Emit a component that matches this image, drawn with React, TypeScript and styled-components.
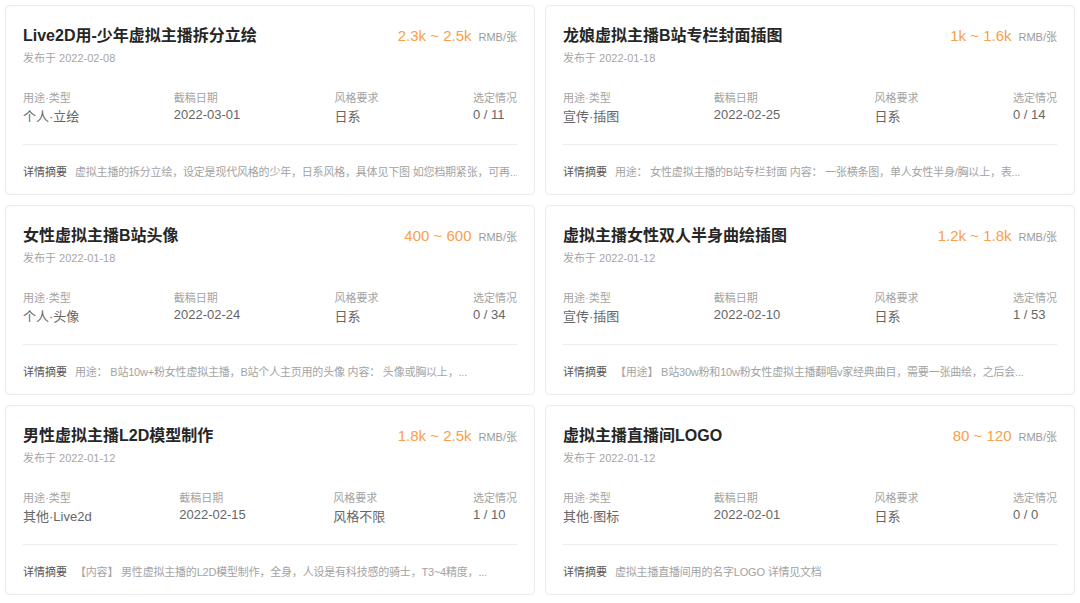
import React from 'react';
import styled, { createGlobalStyle } from 'styled-components';

const GlobalStyle = createGlobalStyle`
  html, body {
    margin: 0;
    padding: 0;
    background: #ffffff;
  }
  body {
    font-family: "Liberation Sans", Arial, "Noto Sans CJK SC", sans-serif;
    -webkit-font-smoothing: antialiased;
  }
`;

const Grid = styled.div`
  display: grid;
  grid-template-columns: 1fr 1fr;
  grid-auto-rows: 190px;
  gap: 10px;
  padding: 5px;
  box-sizing: border-box;
  width: 1080px;
`;

const Card = styled.div`
  background: #fff;
  border: 1px solid #ebebeb;
  border-radius: 4px;
  box-sizing: border-box;
  padding: 19px 17px 0 17px;
  display: flex;
  flex-direction: column;
  overflow: hidden;
`;

const Header = styled.div`
  display: flex;
  justify-content: space-between;
  align-items: baseline;
`;

const Title = styled.h3`
  margin: 0;
  font-size: 16px;
  line-height: 22px;
  font-weight: 700;
  color: #262626;
`;

const Price = styled.div`
  font-size: 15px;
  line-height: 22px;
  color: #f8a04a;
  white-space: nowrap;
`;

const Unit = styled.span`
  font-size: 11px;
  color: #9a9a9a;
  margin-left: 7px;
`;

const Published = styled.div`
  margin-top: 2px;
  font-size: 11px;
  line-height: 16px;
  color: #a6a6a6;
`;

const InfoRow = styled.div`
  display: flex;
  justify-content: space-between;
  margin-top: 24px;
  padding-bottom: 18px;
  border-bottom: 1px solid #ececec;
`;

const InfoCol = styled.div`
  display: flex;
  flex-direction: column;
`;

const Label = styled.div`
  font-size: 11px;
  line-height: 16px;
  color: #a3a3a3;
  white-space: nowrap;
`;

const Value = styled.div<{ $num?: boolean }>`
  margin-top: 2px;
  font-size: 13px;
  line-height: 18px;
  color: #666;
  white-space: nowrap;
  transform: translateY(${(p) => (p.$num ? '-2px' : '0')});
`;

const Summary = styled.div`
  margin-top: 18px;
  display: flex;
  align-items: baseline;
  font-size: 11px;
  line-height: 18px;
  white-space: nowrap;
  overflow: hidden;
`;

const SummaryLabel = styled.span`
  color: #555;
  margin-right: 8px;
  flex-shrink: 0;
`;

const SummaryText = styled.span`
  color: #a3a3a3;
  letter-spacing: -0.2px;
  overflow: hidden;
`;

interface Job {
  title: string;
  price: string;
  date: string;
  type: string;
  deadline: string;
  style: string;
  picked: string;
  summary: string;
}

const jobs: Job[] = [
  {
    title: 'Live2D用-少年虚拟主播拆分立绘',
    price: '2.3k ~ 2.5k',
    date: '2022-02-08',
    type: '个人·立绘',
    deadline: '2022-03-01',
    style: '日系',
    picked: '0 / 11',
    summary: '虚拟主播的拆分立绘，设定是现代风格的少年，日系风格，具体见下图 如您档期紧张，可再...',
  },
  {
    title: '龙娘虚拟主播B站专栏封面插图',
    price: '1k ~ 1.6k',
    date: '2022-01-18',
    type: '宣传·插图',
    deadline: '2022-02-25',
    style: '日系',
    picked: '0 / 14',
    summary: '用途： 女性虚拟主播的B站专栏封面 内容： 一张横条图，单人女性半身/胸以上，表...',
  },
  {
    title: '女性虚拟主播B站头像',
    price: '400 ~ 600',
    date: '2022-01-18',
    type: '个人·头像',
    deadline: '2022-02-24',
    style: '日系',
    picked: '0 / 34',
    summary: '用途： B站10w+粉女性虚拟主播，B站个人主页用的头像 内容： 头像或胸以上，...',
  },
  {
    title: '虚拟主播女性双人半身曲绘插图',
    price: '1.2k ~ 1.8k',
    date: '2022-01-12',
    type: '宣传·插图',
    deadline: '2022-02-10',
    style: '日系',
    picked: '1 / 53',
    summary: '【用途】 B站30w粉和10w粉女性虚拟主播翻唱v家经典曲目，需要一张曲绘，之后会...',
  },
  {
    title: '男性虚拟主播L2D模型制作',
    price: '1.8k ~ 2.5k',
    date: '2022-01-12',
    type: '其他·Live2d',
    deadline: '2022-02-15',
    style: '风格不限',
    picked: '1 / 10',
    summary: '【内容】 男性虚拟主播的L2D模型制作，全身，人设是有科技感的骑士，T3~4精度，...',
  },
  {
    title: '虚拟主播直播间LOGO',
    price: '80 ~ 120',
    date: '2022-01-12',
    type: '其他·图标',
    deadline: '2022-02-01',
    style: '日系',
    picked: '0 / 0',
    summary: '虚拟主播直播间用的名字LOGO 详情见文档',
  },
];

function JobCard({ job }: { job: Job }) {
  return (
    <Card>
      <Header>
        <Title>{job.title}</Title>
        <Price>
          {job.price}
          <Unit>RMB/张</Unit>
        </Price>
      </Header>
      <Published>发布于 {job.date}</Published>
      <InfoRow>
        <InfoCol>
          <Label>用途·类型</Label>
          <Value>{job.type}</Value>
        </InfoCol>
        <InfoCol>
          <Label>截稿日期</Label>
          <Value $num>{job.deadline}</Value>
        </InfoCol>
        <InfoCol>
          <Label>风格要求</Label>
          <Value>{job.style}</Value>
        </InfoCol>
        <InfoCol>
          <Label>选定情况</Label>
          <Value $num>{job.picked}</Value>
        </InfoCol>
      </InfoRow>
      <Summary>
        <SummaryLabel>详情摘要</SummaryLabel>
        <SummaryText>{job.summary}</SummaryText>
      </Summary>
    </Card>
  );
}

export default function App() {
  return (
    <>
      <GlobalStyle />
      <Grid>
        {jobs.map((job) => (
          <JobCard key={job.title} job={job} />
        ))}
      </Grid>
    </>
  );
}
